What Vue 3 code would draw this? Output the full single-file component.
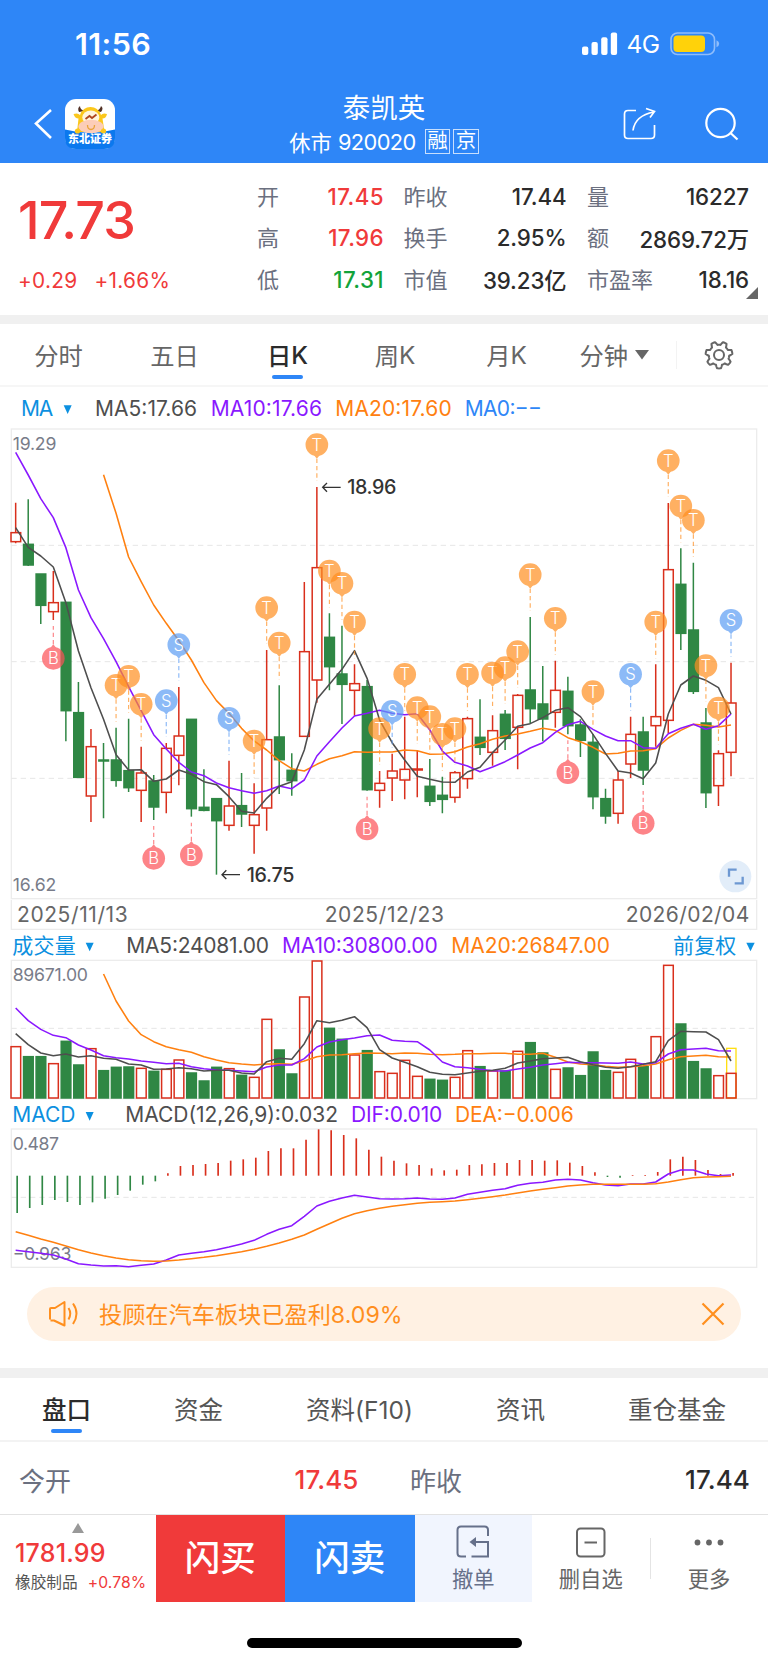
<script setup>
const stats = [
  ['开', '17.45', 'up'], ['昨收', '17.44', ''], ['量', '16227', ''],
  ['高', '17.96', 'up'], ['换手', '2.95%', ''], ['额', '2869.72万', ''],
  ['低', '17.31', 'down'], ['市值', '39.23亿', ''], ['市盈率', '18.16', ''],
]

// Charts are drawn in 3x units: 58 sessions on a fixed pitch.
const cx = (i) => 47 + i * 37.65

// [rising, high, body top, body bottom, low]
const candles = [
  [1,248,338,365,370],[0,238,373,435,438],[0,462,462,556,612],[1,453,548,575,600],[0,547,547,872,964],
  [0,786,878,1072,1072],[1,927,980,1128,1206],[0,969,1020,1023,1195],[0,923,1020,1081,1100],[0,896,1052,1103,1116],
  [1,980,1059,1111,1206],[0,1065,1083,1161,1200],[1,969,985,1117,1180],[1,801,948,1006,1096],[0,898,898,1166,1190],
  [0,1048,1162,1171,1174],[0,1136,1136,1202,1364],[1,1022,1158,1216,1232],[0,1059,1157,1182,1221],[1,1090,1184,1216,1301],
  [1,690,959,1164,1232],[0,796,951,1019,1122],[0,1000,1051,1082,1127],[1,486,695,949,949],[1,201,443,780,848],
  [0,580,652,740,811],[0,617,762,793,912],[1,733,791,811,887],[0,780,800,1109,1112],[1,1053,1090,1111,1163],
  [1,1001,1053,1074,1143],[1,890,1048,1080,1138],[1,990,1047,1050,1132],[0,1017,1099,1144,1158],[0,1070,1126,1138,1180],
  [1,1053,1058,1132,1148],[1,890,896,1076,1106],[0,838,952,982,1005],[1,886,932,997,1037],[0,870,883,955,990],
  [1,822,826,922,1048],[0,591,810,866,911],[0,738,852,897,964],[1,722,811,877,923],[0,770,814,917,943],
  [0,898,915,961,1011],[0,942,967,1130,1168],[0,1106,1136,1188,1211],[1,1053,1080,1180,1211],[1,890,943,1032,1074],
  [0,890,936,1050,1095],[1,733,890,917,980],[1,249,449,901,940],[0,385,493,640,690],[0,428,630,814,822],
  [0,864,909,1118,1164],[1,991,1001,1097,1158],[1,728,849,997,1069],
]
const markers = [
  ...[8,9,10,19,20,21,24,25,26,27,29,31,32,33,34,35,36,38,39,40,41,43,46,51,52,53,54,55,56].map((i) => ({ i, k: 'T' })),
  ...[12,13,17,30,49,57].map((i) => ({ i, k: 'S' })),
  ...[3,11,14,28,44,50].map((i) => ({ i, k: 'B' })),
].sort((a, b) => a.i - b.i).map((m) => {
  const below = m.k === 'B'
  const edge = below ? candles[m.i][4] : candles[m.i][1]
  const d = below ? -1 : 1
  const y = below ? edge + 115 : edge - 127
  const x = cx(m.i)
  return {
    ...m, x, y,
    y1: y + d * 42, y2: edge - d * 18,
    tip: `M${x - 9} ${y + d * 31}L${x} ${y + d * 42}L${x + 9} ${y + d * 31}Z`,
  }
})

const line = (ys, start = 0) => ys.map((y, n) => `${(cx(n + start)).toFixed(1)},${y}`).join(' ')

const ma5 = line([323,382,408,441,548,693,803,898,1004,1050,1049,1084,1077,1050,1063,1085,1094,1130,1174,1179,1135,1099,1085,990,838,793,748,692,775,900,968,1020,1069,1078,1086,1087,1056,1042,998,960,919,911,893,871,863,890,943,1000,1053,1059,1076,1029,882,795,768,781,803,882])
const ma10 = line([97,165,236,293,383,510,593,656,725,800,872,944,987,1027,1056,1067,1089,1103,1112,1120,1112,1098,1106,1080,1008,965,924,888,880,871,880,884,881,930,993,1027,1038,1055,1041,1025,1005,984,968,937,914,904,928,948,962,962,983,985,941,925,913,928,917,882])
const ma20 = line([164,280,411,485,555,610,662,720,788,842,880,925,963,990,1022,1046,1053,1033,1016,1007,995,997,996,996,990,992,1003,1002,995,981,971,958,948,942,934,925,931,953,965,982,1002,1000,993,992,986,954,931,913,916,921,915], 7)

const volumes = [470,500,500,521,454,525,476,542,532,531,535,544,538,510,549,573,532,536,556,562,388,480,552,321,213,415,448,495,482,545,550,511,559,568,571,562,482,530,543,543,484,458,489,538,534,557,486,542,547,508,530,440,226,402,515,537,557,550]
const vma5 = line([431,464,489,497,492,501,497,505,508,522,525,538,537,533,536,543,541,541,549,552,515,505,508,461,392,398,391,380,413,479,504,517,530,547,553,554,549,544,541,535,519,513,506,504,502,515,518,524,532,535,530,523,515,452,424,425,426,449,513].filter((_, n) => n !== 46))
const vma10 = line([354,392,418,436,443,465,480,497,503,507,513,517,521,520,530,536,540,541,543,545,531,525,525,506,471,456,449,444,437,435,451,454,455,480,516,530,533,538,542,543,537,532,525,521,517,518,518,519,520,516,522,518,492,479,477,475,482,483])
const vma20 = line([252,333,393,434,455,470,479,487,500,510,518,522,525,522,521,523,513,500,495,494,491,489,490,491,489,490,493,494,493,491,491,490,490,493,493,490,502,516,522,524,529,532,530,527,522,509,500,498,496,500,501], 7)

const macd = [969,954,945,930,936,945,937,926,915,902,884,874,850,828,825,822,819,812,808,803,783,775,775,749,718,721,735,745,779,800,812,820,825,835,841,839,825,823,819,819,810,810,812,811,818,828,847,861,863,855,855,846,808,800,810,840,852,849]
const dif = line([1081,1085,1090,1095,1107,1121,1125,1128,1127,1130,1126,1122,1110,1095,1090,1085,1079,1071,1062,1051,1033,1018,1007,979,948,934,924,916,921,926,927,926,924,927,928,924,913,907,901,896,886,880,877,870,868,870,878,885,887,882,882,876,852,840,840,852,857,855])
const dea = line([1025,1036,1047,1057,1068,1079,1089,1097,1104,1109,1112,1114,1113,1110,1106,1102,1097,1091,1085,1078,1069,1059,1048,1035,1018,1001,985,971,962,955,949,944,940,937,935,933,929,925,920,915,909,903,898,893,888,885,883,883,883,883,883,881,876,869,863,861,860,859])

// Seven flat teeth, one pointing straight down.
const gear = Array.from({ length: 84 }, (_, n) => {
  const t = (n / 84) * Math.PI * 2 + Math.PI / 2
  const w = Math.cos(7 * (t - Math.PI / 2))
  const r = 11.8 + Math.max(-1, Math.min(1, w * 2.2)) * 1.6
  return `${(15 + r * Math.cos(t)).toFixed(2)},${(15 + r * Math.sin(t)).toFixed(2)}`
}).join(' ')
</script>

<template>
  <div class="app">
    <header class="top">
      <div class="status">
        <span class="clock">11:56</span>
        <div class="sys">
          <svg class="signal" width="36" height="24" viewBox="0 0 36 24">
            <rect x="0" y="14.5" width="6.3" height="8.5" rx="2" /><rect x="9.5" y="10" width="6.3" height="13" rx="2" />
            <rect x="19.2" y="5.3" width="6.3" height="17.7" rx="2" /><rect x="28.8" y="0.5" width="6.3" height="22.5" rx="2" />
          </svg>
          <span class="net">4G</span>
          <svg width="50" height="24" viewBox="0 0 50 24">
            <rect x="1" y="1" width="43.5" height="21.5" rx="6.5" fill="none" stroke="#8fbdfb" stroke-width="1.6" />
            <rect x="3.5" y="3.5" width="31.5" height="16.5" rx="4" fill="#ffd20a" />
            <path d="M46.5 8.3Q49.2 9.5 49.2 11.8T46.5 15.3Z" fill="#8fbdfb" />
          </svg>
        </div>
      </div>
      <div class="nav">
        <svg class="back" width="20" height="32" viewBox="0 0 20 32"><path d="M17 2L2 15.5L17 30" fill="none" stroke="#fff" stroke-width="2.6" /></svg>
        <div class="logo">
          <svg width="50" height="50" viewBox="0 0 50 50">
            <rect width="50" height="50" rx="11" fill="#fff" />
            <path d="M0 30.5Q25 37 50 30.5V39Q50 50 39 50H11Q0 50 0 39Z" fill="#0b78ee" />
            <path d="M14 13Q12 9 15 7Q15 11 20 12ZM36 13Q39 9 36 7Q35 11 31 12Z" fill="#513024" />
            <path d="M8.5 15Q13 13.500 15 16Q18 8 25.500 8T36 16Q38 13.500 42 15Q41 19.500 37.500 19.500L39.500 33H12L13.500 19.500Q10 19.500 8.500 15Z" fill="#fbc71c" />
            <ellipse cx="25.800" cy="18.500" rx="8.500" ry="7" fill="#fff5dc" />
            <path d="M20.500 20L24.500 17L27 19L31.500 15.500" fill="none" stroke="#ae451e" stroke-width="1.8" />
            <ellipse cx="26" cy="27.500" rx="12.500" ry="6.700" fill="#fccdb8" />
            <path d="M22.500 26Q22.500 30.500 26 30.500T29.500 26" fill="none" stroke="#e9a43b" stroke-width="1.3" />
            <circle cx="12.500" cy="32" r="2.600" fill="#fbc71c" /><circle cx="38.500" cy="32" r="2.600" fill="#fbc71c" />
          </svg>
          <span>东北证券</span>
        </div>
        <div class="title">
          <h1>泰凯英</h1>
          <p>休市 <b>920020</b><i>融</i><i>京</i></p>
        </div>
        <svg class="share" width="34" height="34" viewBox="0 0 34 34" fill="none" stroke="#fff" stroke-width="1.7">
          <path d="M13 3.500H5Q1.500 3.500 1.500 7V28Q1.500 31.500 5 31.500H28Q31.500 31.500 31.500 28V18" />
          <path d="M10 23.500Q12 8.500 31 5M23 1.500L31.500 4.500L27 10.500" />
        </svg>
        <svg class="search" width="36" height="36" viewBox="0 0 36 36" fill="none" stroke="#fff" stroke-width="2.2">
          <circle cx="16.500" cy="17" r="14.200" /><path d="M26.500 27L33.500 33.500" />
        </svg>
      </div>
    </header>

    <section class="quote">
      <div class="last">
        <strong>17.73</strong>
        <p><span>+0.29</span><span>+1.66%</span></p>
      </div>
      <dl>
        <div v-for="s in stats" :key="s[0]"><dt>{{ s[0] }}</dt><dd :class="s[2]">{{ s[1] }}</dd></div>
      </dl>
      <svg class="corner" width="12" height="12" viewBox="0 0 12 12"><path d="M12 0V12H0Z" fill="#666" /></svg>
    </section>

    <nav class="periods">
      <span>分时</span><span>五日</span><span class="on">日<em>K</em></span><span>周<em>K</em></span><span>月<em>K</em></span>
      <span class="min">分钟<svg width="14" height="10" viewBox="0 0 14 10"><path d="M0 0H14L7 9.500Z" fill="#666" /></svg></span>
      <div class="cfg">
        <svg width="30" height="30" viewBox="0 0 30 30" fill="none" stroke="#666" stroke-width="2" stroke-linejoin="round">
          <polygon :points="gear" /><circle cx="15" cy="15" r="5" />
        </svg>
      </div>
    </nav>

    <svg class="chart" width="768" height="513" viewBox="0 -99 2304 1539">
      <g class="legend">
        <text class="key" x="63" y="-12" textLength="97">MA</text><path class="tri" d="M191 -44H215L203 -18Z" />
        <text class="c5" x="285" y="-12" textLength="306">MA5:17.66</text>
        <text class="c10" x="632" y="-12" textLength="334">MA10:17.66</text>
        <text class="c20" x="1006" y="-12" textLength="349">MA20:17.60</text>
        <text class="c0" x="1394" y="-12" textLength="232">MA0:−−</text>
      </g>
      <rect class="frame" x="34" y="27" width="2236" height="1409" />
      <path class="grid" d="M34 376H2270M34 725H2270M34 1075H2270" />
      <g v-for="(c, i) in candles" :key="i" :class="c[0] ? 'rise' : 'fall'">
        <path :d="`M${cx(i)} ${c[1]}V${c[2]}M${cx(i)} ${c[3]}V${c[4]}`" />
        <rect :x="cx(i) - 14" :y="c[2]" width="29" :height="c[3] - c[2]" />
      </g>
      <polyline class="l20" :points="ma20" /><polyline class="l10" :points="ma10" /><polyline class="l5" :points="ma5" />
      <g v-for="m in markers" :key="m.i" :class="'mk ' + m.k">
        <line :x1="m.x" :x2="m.x" :y1="m.y1" :y2="m.y2" />
        <g class="pin"><circle :cx="m.x" :cy="m.y" r="34" /><path :d="m.tip" /></g>
        <text :x="m.x" :y="m.y + 18">{{ m.k }}</text>
      </g>
      <text class="axis" x="38" y="89" textLength="131">19.29</text>
      <text class="axis" x="38" y="1412" textLength="131">16.62</text>
      <g class="note">
        <path d="M1022 202H967M981 189L968 202L981 215M720 1364H665M679 1351L666 1364L679 1377" />
        <text x="1042" y="222" textLength="147">18.96</text><text x="740" y="1385" textLength="143">16.75</text>
      </g>
      <circle cx="2206" cy="1369" r="48" fill="#e2edf9" />
      <path d="M2187 1370V1349H2210M2204 1390H2228V1370" fill="none" stroke="#6d98d2" stroke-width="7" />
    </svg>

    <svg class="chart" width="768" height="380" viewBox="0 30 2304 1140">
      <path class="solid" d="M34 30V118H2270V30" />
      <g class="date">
        <text x="51" y="97" textLength="332">2025/11/13</text><text x="974" y="97" textLength="358">2025/12/23</text><text x="1877" y="97" textLength="371">2026/02/04</text>
      </g>
      <g class="legend">
        <text class="key" x="37" y="189" textLength="190">成交量</text><path class="tri" d="M257 158H281L269 184Z" />
        <text class="c5" x="379" y="189" textLength="428">MA5:24081.00</text>
        <text class="c10" x="846" y="189" textLength="467">MA10:30800.00</text>
        <text class="c20" x="1354" y="189" textLength="476">MA20:26847.00</text>
        <text class="key" x="2019" y="189" textLength="190">前复权</text><path class="tri" d="M2239 158H2264L2251.500 184Z" />
      </g>
      <rect class="frame" x="34" y="211" width="2236" height="415" />
      <path class="grid" d="M34 415H2270" />
      <rect x="2180" y="475" width="28" height="149" fill="none" stroke="#ffdf12" stroke-width="4" />
      <g v-for="(v, i) in volumes" :key="i" :class="candles[i][0] ? 'rise' : 'fall'">
        <rect :x="cx(i) - 14" :y="v" width="29" :height="624 - v" />
      </g>
      <polyline class="l20" :points="vma20" /><polyline class="l10" :points="vma10" /><polyline class="l5" :points="vma5" />
      <text class="axis" x="38" y="273" textLength="226">89671.00</text>
      <g class="legend">
        <text class="key" x="37" y="696" textLength="189">MACD</text><path class="tri" d="M257 666H281L269 692Z" />
        <text class="c5" x="376" y="696" textLength="638">MACD(12,26,9):0.032</text>
        <text class="c10" x="1053" y="696" textLength="274">DIF:0.010</text>
        <text class="c20" x="1365" y="696" textLength="356">DEA:−0.006</text>
      </g>
      <rect class="frame" x="34" y="717" width="2236" height="415" />
      <path class="grid" d="M34 922H2270" />
      <text class="axis" x="38" y="781" textLength="139">0.487</text>
      <text class="axis" x="38" y="1109" textLength="176">−0.963</text>
      <g class="hist">
        <path v-for="(v, i) in macd" :key="i" :class="v > 857 ? 'neg' : 'pos'" :d="`M${51.5 + i * 37.68} 857V${v}`" />
      </g>
      <polyline class="l10" :points="dif" /><polyline class="l20" :points="dea" />
    </svg>

    <div class="promo">
      <svg width="30" height="28" viewBox="0 0 30 28" fill="none" stroke="#ff8f1e" stroke-width="2" stroke-linejoin="round">
        <path d="M1 19.500V9Q1 8 2 8H6L15.500 2V25.500L5 20.500H1.500" /><path d="M19.500 8Q23 13.500 19.500 19.500M24 3.500Q31 13.500 24 24" />
      </svg>
      <span>投顾在汽车板块已盈利8.09%</span>
      <svg class="x" width="24" height="24" viewBox="0 0 24 24"><path d="M1.500 1.500L22.500 22.500M22.500 1.500L1.500 22.500" stroke="#ff8f1e" stroke-width="2.200" /></svg>
    </div>

    <nav class="tabs"><span class="on">盘口</span><span>资金</span><span>资料(F10)</span><span>资讯</span><span>重仓基金</span></nav>

    <div class="row"><span>今开</span><b class="up">17.45</b><span class="second">昨收</span><b>17.44</b></div>

    <footer>
      <div class="index">
        <svg width="12" height="10" viewBox="0 0 12 10"><path d="M6 0L12 10H0Z" fill="#999" /></svg>
        <strong>1781.99</strong>
        <p>橡胶制品<span>+0.78%</span></p>
      </div>
      <button class="buy">闪买</button>
      <button class="sell">闪卖</button>
      <div class="act cancel">
        <svg width="34" height="34" viewBox="0 0 34 34" fill="none" stroke="#66708a" stroke-width="2">
          <path d="M32 11V5Q32 1.500 28.500 1.500H5Q1.500 1.500 1.500 5V28Q1.500 31.500 5 31.500H10M15.500 31.500H32V17H17" /><path d="M20 12V22L13.500 17Z" fill="#66708a" stroke="none" />
        </svg>
        <span>撤单</span>
      </div>
      <div class="act">
        <svg width="34" height="34" viewBox="0 0 34 34" fill="none" stroke="#666" stroke-width="2"><rect x="3" y="3.500" width="27.500" height="28" rx="3.500" /><path d="M10.500 17.500H23" /></svg>
        <span>删自选</span>
      </div>
      <div class="act more">
        <svg width="34" height="34" viewBox="0 0 34 34" fill="#666"><circle cx="5.500" cy="17.500" r="2.900" /><circle cx="17" cy="17.500" r="2.900" /><circle cx="28.500" cy="17.500" r="2.900" /></svg>
        <span>更多</span>
      </div>
    </footer>
    <div class="home"></div>
  </div>
</template>

<style>
body { margin: 0; background: #fff; }
</style>

<style scoped>
.app { width: 768px; height: 1662px; overflow: hidden; background: #fff; color: #2b2b2b; font-family: Inter, "Noto Sans CJK SC", sans-serif; display: flex; flex-direction: column; }
.app > * { flex: none; box-sizing: border-box; }
h1, p, dl, dd { margin: 0; }
i, em { font-style: normal; }
.up { color: #f03a3a !important; }
.down { color: #12a33a !important; }

.top { height: 163px; background: #2e86f7; color: #fff; }
.status { height: 88px; display: flex; justify-content: space-between; align-items: center; padding: 0 48px 0 75px; box-sizing: border-box; }
.clock { font-size: 30.500px; font-weight: 600; letter-spacing: 0.4px; padding-bottom: 2px; }
.sys { display: flex; align-items: center; }
.signal { fill: #fff; margin-right: 9px; }
.net { font-size: 24.500px; width: 43.500px; letter-spacing: -0.5px; }
.nav { height: 75px; display: flex; align-items: flex-start; }
.back { margin: 20px 0 0 34px; }
.logo { width: 50px; height: 50px; margin: 11px 0 0 11px; display: grid; }
.logo > * { grid-area: 1 / 1; }
.logo span { align-self: end; justify-self: center; font-size: 11px; font-weight: 900; line-height: 19px; white-space: nowrap; }
.title { width: 400px; margin: 4px 0 0 69px; text-align: center; }
h1 { font-size: 27.500px; font-weight: 400; line-height: 32px; }
.title p { display: flex; justify-content: center; align-items: center; height: 35px; font-size: 21.300px; }
.title b { font-weight: 400; margin: 0 9px 0 6px; letter-spacing: -0.6px; font-size: 21.800px; }
.title i { width: 25.500px; height: 25px; border: 1.300px solid #c8dffd; box-sizing: border-box; font-size: 20.500px; line-height: 21px; margin-right: 3px; display: flex; justify-content: center; }
.title i:last-child { margin-right: 0; }
.share { margin: 19px 0 0 39px; }
.search { margin: 18px 0 0 47px; }

.quote { height: 161px; border-bottom: 9px solid #f0f0f0; position: relative; display: flex; box-sizing: border-box; }
.last { width: 257px; padding: 23px 0 0 18px; box-sizing: border-box; color: #f03a3a; }
.last strong { display: block; font-size: 52px; font-weight: 500; line-height: 70px; letter-spacing: -0.8px; }
.last p { display: flex; gap: 17px; font-size: 20.800px; line-height: 28px; margin-top: 11px; letter-spacing: 0.3px; }
.quote dl { display: grid; grid-template-columns: 127px 163px 162px; column-gap: 19.500px; grid-auto-rows: 41.300px; padding-top: 13px; height: 124px; }
dl div { display: flex; justify-content: space-between; align-items: center; }
dl div:nth-child(3n) { padding-left: 1px; margin-right: -1px; }
dt { font-size: 22px; color: #6b7080; padding-bottom: 3px; }
dd { font-size: 22.300px; font-weight: 500; color: #2b2b2b; letter-spacing: -0.1px; }
dl div:nth-child(3n+1) dd { letter-spacing: 0.4px; }
.corner { position: absolute; right: 10px; bottom: 16px; }

.periods { height: 63px; border-bottom: 2px solid #f6f6f6; display: grid; grid-template-columns: 117px 115px 111px 104px 119px 110px 92px; color: #666; font-size: 24.300px; }
.periods > span { display: flex; align-items: center; justify-content: center; height: 61px; position: relative; white-space: nowrap; }
.periods .on { font-weight: 500; color: #2b2b2b; }
.on::after { content: ""; position: absolute; left: 50%; margin-left: -15.500px; width: 31px; height: 4.500px; border-radius: 2.500px; background: #2e86f7; bottom: 6px; }
.periods .min { gap: 7px; justify-content: flex-end; padding-right: 27px; }
.cfg { display: flex; height: 28px; margin-top: 17px; border-left: 1.500px solid #f3f3f3; align-items: center; padding-left: 27px; }

.chart { display: block; font-family: Inter, "Noto Sans CJK SC", sans-serif; }
.frame { fill: none; stroke: #ececec; stroke-width: 4; }
.solid { fill: none; stroke: #ececec; stroke-width: 4; }
.grid { stroke: #e6e6e6; stroke-width: 3; stroke-dasharray: 16 12; }
.legend text { font-size: 63px; }
.key, .tri { fill: #0c90e0; }
.c5 { fill: #4e4e4e; } .c10 { fill: #8a18ff; } .c20 { fill: #ff8010; } .c0 { fill: #2e86f7; }
.axis { font-size: 53px; fill: #787c89; }
.date text { font-size: 63px; fill: #666; }
.rise path, .rise rect { stroke: #d92f1c; stroke-width: 4.500; fill: none; }
.fall path, .fall rect { stroke: #2f8744; stroke-width: 4.500; fill: #2f8744; }
polyline { fill: none; stroke-width: 4.700; stroke-linejoin: round; }
.l5 { stroke: #4e4e4e; } .l10 { stroke: #8a18ff; } .l20 { stroke: #ff8010; }
.mk line { stroke-width: 3.500; stroke-dasharray: 13 9; opacity: 0.7; }
.mk text { fill: #fff; font-size: 50px; font-weight: 300; text-anchor: middle; }
.pin { opacity: 0.7; }
.T .pin { fill: #ff8f20; } .T line { stroke: #ff8f20; }
.S .pin { fill: #5c9df5; } .S line { stroke: #5c9df5; }
.B .pin { fill: #fd5157; } .B line { stroke: #fd5157; }
.note path { fill: none; stroke: #333; stroke-width: 4; }
.note text { font-size: 59px; fill: #333; font-weight: 500; }
.hist path { stroke-width: 5; }
.hist .pos { stroke: #d92f1c; } .hist .neg { stroke: #2f8744; }

.promo { margin: 7px 27px 0; height: 54px; border-radius: 27px; background: #fff1e3; display: flex; align-items: center; padding: 0 16px 0 22px; color: #ff8f1e; font-size: 23.200px; }
.promo span { flex: 1; margin-left: 20px; padding-bottom: 2px; }
.tabs { margin-top: 27px; height: 74px; border-top: 10px solid #f0f0f0; border-bottom: 2px solid #f3f3f3; display: flex; justify-content: space-between; padding: 0 42px; font-size: 24.500px; color: #555; font-weight: 400; }
.tabs span { position: relative; display: flex; align-items: center; height: 60px; }
.tabs .on { font-weight: 500; color: #2b2b2b; }
.tabs .on::after { bottom: 5px; }
.row { height: 72px; display: flex; align-items: center; padding: 2px 18px 0 19px; font-size: 26px; color: #6b7080; }
.row b { flex: 1; text-align: right; color: #2b2b2b; font-weight: 500; font-size: 26px; letter-spacing: 0.1px; }
.row b.up { flex: 0 0 287.500px; }
.second { margin-left: 51.500px; }

footer { height: 88px; border-top: 1.500px solid #e2e2e2; display: flex; }
.index { width: 155.500px; display: flex; flex-direction: column; padding: 8px 0 0 15px; box-sizing: border-box; color: #f03a3a; }
.index svg { margin-left: 57px; }
.index strong { font-size: 25px; line-height: 30px; font-weight: 500; letter-spacing: 0.2px; margin-top: 5px; }
.index p { font-size: 15.700px; color: #555; line-height: 30px; white-space: nowrap; }
.index p span { color: #f03a3a; margin-left: 10px; letter-spacing: 0.1px; }
button { border: 0; width: 129.500px; padding: 0 0 6px; color: #fff; font: 500 35.500px "Noto Sans CJK SC", sans-serif; }
.buy { background: #f03a3a; } .sell { background: #2e86f7; }
.act { width: 117.500px; display: flex; flex-direction: column; align-items: center; padding-top: 10px; box-sizing: border-box; font-size: 21.300px; color: #666; }
.act span { line-height: 30px; margin-top: 5px; }
.cancel { background: #f1f5fe; color: #66708a; }
.more { width: 118px; border-left: 1.500px solid #e4e4e4; height: 41px; margin-top: 23px; padding: 0; }
.more svg { margin-top: -13px; flex: none; }
.more span { white-space: nowrap; }
.home { width: 275px; height: 10px; margin: 36px auto 0; border-radius: 5px; background: #000; }
</style>
